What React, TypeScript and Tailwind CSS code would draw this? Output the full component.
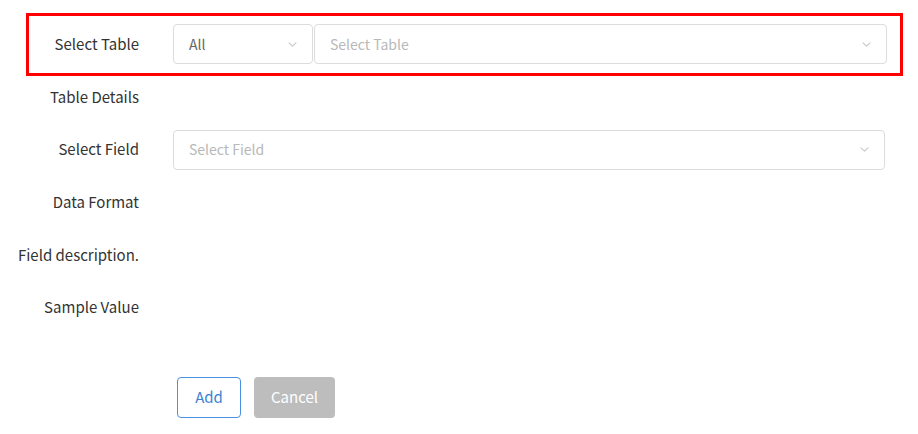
import React from "react";

const Chevron = () => (
  <svg width="9" height="5" viewBox="0 0 9 5" fill="none" className="shrink-0">
    <path d="M1 0.8l3.5 3.4 3.5-3.4" stroke="#c8c8c8" strokeWidth="1.1" strokeLinecap="round" strokeLinejoin="round" />
  </svg>
);

const Label = ({ children }: { children: React.ReactNode }) => (
  <div className="w-[139px] shrink-0 text-right text-[15px] text-[#333]">{children}</div>
);

const SelectBox = ({ text, placeholder, className }: { text: string; placeholder?: boolean; className: string }) => (
  <div
    className={`flex h-[40px] items-center justify-between rounded-[4px] border border-[#dcdcdc] bg-white pl-[15px] pr-[15px] text-[14px] ${className} ${
      placeholder ? "text-[#b8b8b8]" : "text-[#666]"
    }`}
  >
    <span>{text}</span>
    <Chevron />
  </div>
);

export default function App() {
  return (
    <div
      className="w-[918px] h-[434px] bg-white pt-[13px]"
      style={{ fontFamily: '"Noto Sans CJK KR", "Noto Sans", sans-serif' }}
    >
      <div className="ml-[26px] w-[877px] border-[3px] border-[#ff0000] pt-[8px] pb-[9px]">
        <div className="flex items-center">
          <div className="w-[110px] shrink-0 text-right text-[15px] text-[#333]">Select Table</div>
          <div className="ml-[34px] flex gap-[1px]">
            <SelectBox text="All" className="w-[140px]" />
            <SelectBox text="Select Table" placeholder className="w-[573px]" />
          </div>
        </div>
      </div>
      <div className="-mt-[4px]">
        <div className="flex h-[51px] items-center">
          <Label>Table Details</Label>
        </div>
        <div className="flex h-[53px] items-center">
          <Label>Select Field</Label>
          <SelectBox text="Select Field" placeholder className="ml-[34px] w-[712px]" />
        </div>
        <div className="flex h-[53px] items-center">
          <Label>Data Format</Label>
        </div>
        <div className="flex h-[52px] items-center">
          <Label>Field description.</Label>
        </div>
        <div className="flex h-[53px] items-center">
          <Label>Sample Value</Label>
        </div>
      </div>
      <div className="mt-[43px] flex gap-[13px] pl-[177px]">
        <button className="h-[41px] w-[64px] rounded-[4px] border border-[#4a90e2] bg-white text-[15px] text-[#3b82d6]">
          Add
        </button>
        <button className="h-[41px] w-[81px] rounded-[4px] bg-[#bdbdbd] text-[15px] text-white">Cancel</button>
      </div>
    </div>
  );
}
